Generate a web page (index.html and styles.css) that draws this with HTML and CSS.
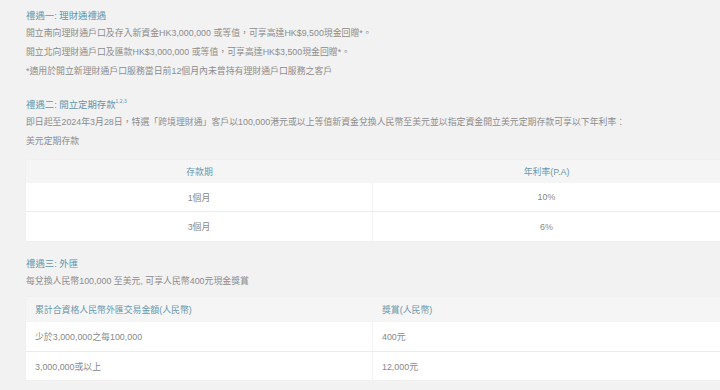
FILE: index.html
```html
<!DOCTYPE html>
<html lang="zh-TW">
<head>
<meta charset="utf-8">
<link rel="stylesheet" href="styles.css">
</head>
<body>
<div class="page">
  <section class="sec sec1">
    <h2 class="title">禮遇一: 理財通禮遇</h2>
    <p class="txt">開立南向理財通戶口及存入新資金HK3,000,000 或等值，可享高達HK$9,500現金回贈*。</p>
    <p class="txt">開立北向理財通戶口及匯款HK$3,000,000 或等值，可享高達HK$3,500現金回贈*。</p>
    <p class="txt">*適用於開立新理財通戶口服務當日前12個月內未曾持有理財通戶口服務之客戶</p>
  </section>

  <section class="sec sec2">
    <h2 class="title">禮遇二: 開立定期存款<sup class="sup">1,2,3</sup></h2>
    <p class="txt">即日起至2024年3月28日，特選「跨境理財通」客戶以100,000港元或以上等值新資金兌換人民幣至美元並以指定資金開立美元定期存款可享以下年利率：</p>
    <p class="txt">美元定期存款</p>
    <div class="tbl tbl1">
      <div class="row head">
        <div class="cell">存款期</div>
        <div class="cell">年利率(P.A)</div>
      </div>
      <div class="row body r1">
        <div class="cell">1個月</div>
        <div class="cell">10%</div>
      </div>
      <div class="row body r2">
        <div class="cell">3個月</div>
        <div class="cell">6%</div>
      </div>
    </div>
  </section>

  <section class="sec sec3">
    <h2 class="title">禮遇三: 外匯</h2>
    <p class="txt">每兌換人民幣100,000 至美元, 可享人民幣400元現金獎賞</p>
    <div class="tbl tbl2">
      <div class="row head">
        <div class="cell">累計合資格人民幣外匯交易金額(人民幣)</div>
        <div class="cell">獎賞(人民幣)</div>
      </div>
      <div class="row body r1">
        <div class="cell">少於3,000,000之每100,000</div>
        <div class="cell">400元</div>
      </div>
      <div class="row body r2">
        <div class="cell">3,000,000或以上</div>
        <div class="cell">12,000元</div>
      </div>
    </div>
  </section>
</div>
</body>
</html>
```

FILE: styles.css
```css
html, body {
  margin: 0;
  padding: 0;
  background: #f2f2f2;
}
body {
  font-family: "Liberation Sans", "Noto Sans CJK TC", sans-serif;
  color: #8c8c8c;
  font-size: 8.9px;
  overflow: hidden;
  width: 720px;
  height: 390px;
}
.page {
  padding: 8px 0 0 26px;
}
.sec { margin: 0; }
.title {
  margin: 0;
  font-weight: normal;
  font-size: 9.4px;
  line-height: 16px;
  color: #6095ae;
}
.sup {
  font-size: 5px;
  vertical-align: 5px;
  line-height: 0;
}
.txt {
  margin: 0;
  line-height: 19px;
}
.sec2 { margin-top: 16px; }
.sec3 { margin-top: 15px; }

.tbl {
  margin-top: 9px;
  display: flex;
  flex-direction: column;
  box-shadow: 0 0 1px rgba(0,0,0,0.06);
}
.tbl2 { margin-top: 6px; }
.row {
  display: grid;
  grid-template-columns: 347px 1fr;
}
.head {
  background: #f5f5f5;
  color: #6a98ad;
}
.body {
  background: #ffffff;
  color: #888;
}
.r1 { border-bottom: 1px solid #ececec; }
.body .cell:first-child { border-right: 1px solid #f3f3f3; }
.cell {
  display: flex;
  align-items: center;
}
.tbl1 .cell { justify-content: center; }
.tbl1 .head { height: 23px; }
.tbl1 .r1 { height: 28px; }
.tbl1 .r2 { height: 29px; }
.tbl2 .cell { padding-left: 9px; }
.tbl2 .head { height: 25px; }
.tbl2 .r1 { height: 29px; }
.tbl2 .r2 { height: 28px; }
```
